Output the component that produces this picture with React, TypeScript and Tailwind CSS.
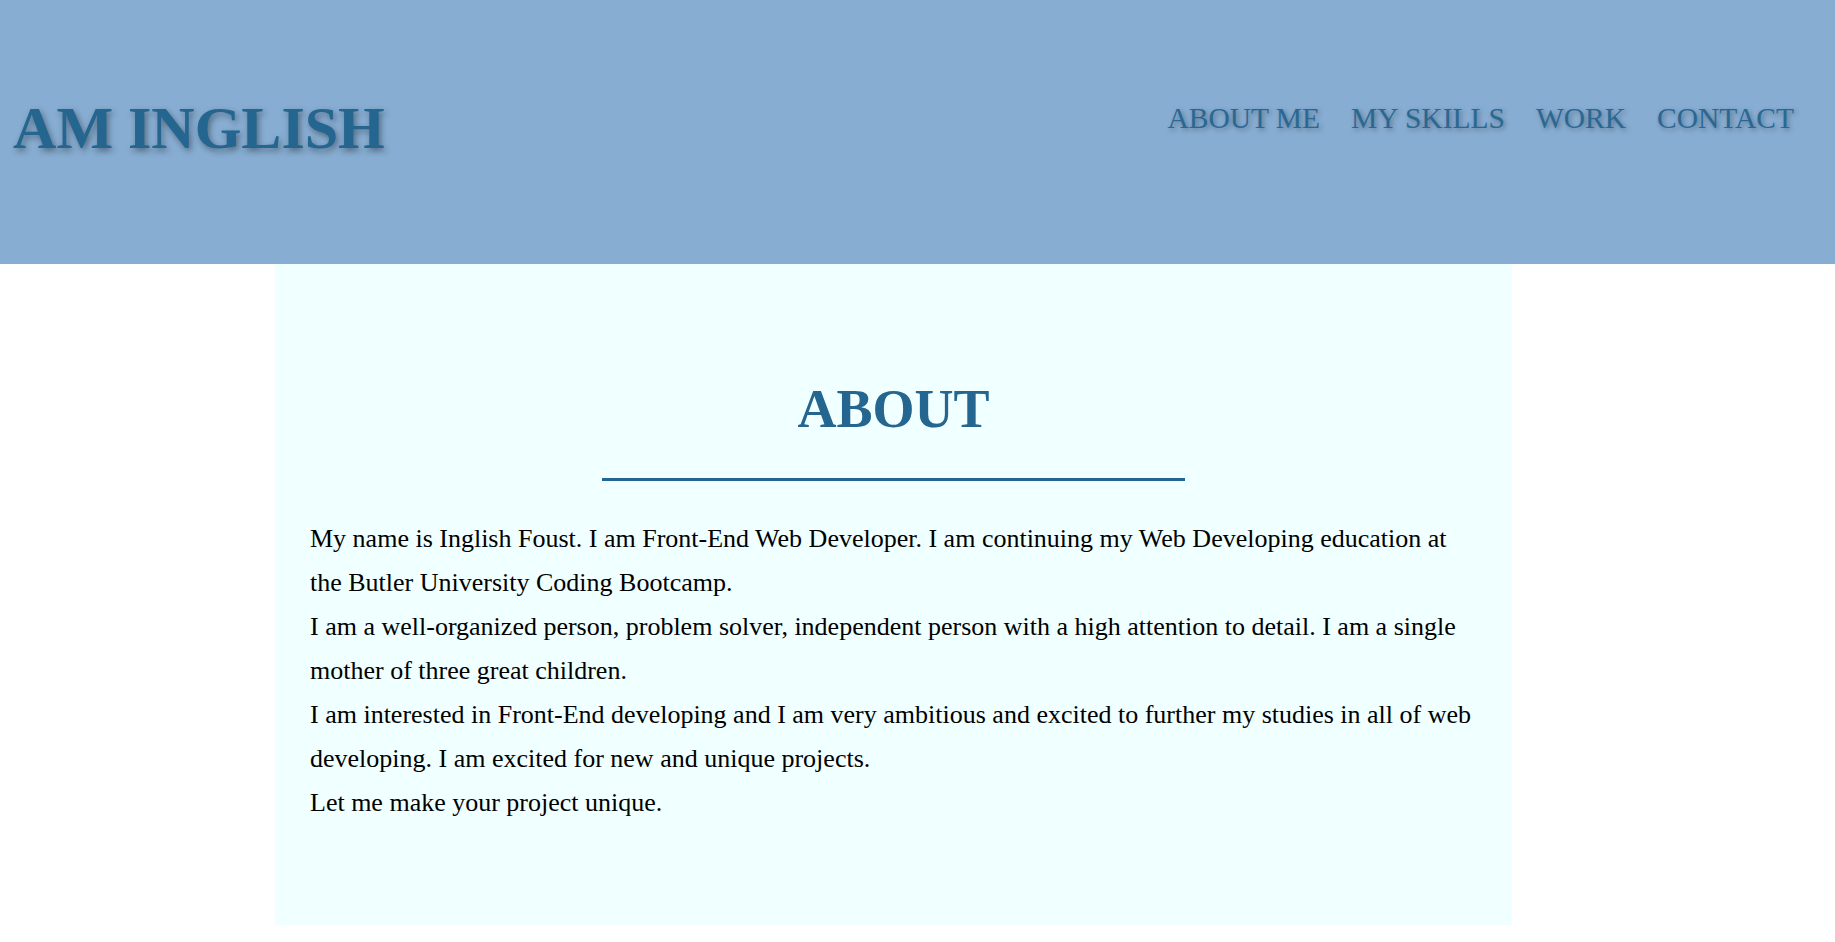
const paragraphs = [
  'My name is Inglish Foust. I am Front-End Web Developer. I am continuing my Web Developing education at the Butler University Coding Bootcamp.',
  'I am a well-organized person, problem solver, independent person with a high attention to detail. I am a single mother of three great children.',
  'I am interested in Front-End developing and I am very ambitious and excited to further my studies in all of web developing. I am excited for new and unique projects.',
  'Let me make your project unique.',
];

const navLinks = ['ABOUT ME', 'MY SKILLS', 'WORK', 'CONTACT'];

export default function App() {
  return (
    <div className="min-h-screen bg-white font-['Liberation_Serif','Times_New_Roman',serif]">
      <header className="h-[264px] bg-[#87add2] flex justify-between items-start overflow-hidden">
        <h1 className="mt-[98px] ml-[-28px] text-[60px] leading-none font-bold whitespace-nowrap text-[#24668f] [text-shadow:2px_3px_6px_rgba(0,0,0,0.4)]">
          <span className="mr-[6px]">I</span> AM INGLISH
        </h1>
        <nav className="mt-[104px] mr-[41px] flex gap-[31px]">
          {navLinks.map((link) => (
            <a
              key={link}
              href="#"
              className="text-[29.5px] leading-none whitespace-nowrap text-[#2a6893] [text-shadow:2px_2px_5px_rgba(0,0,0,0.35)]"
            >
              {link}
            </a>
          ))}
        </nav>
      </header>

      <section className="ml-[275px] w-[1237px] bg-[#f0ffff] pt-[105px] pb-[100px] px-[35px]">
        <h2 className="text-center text-[54px] font-bold text-[#24668f]">ABOUT</h2>
        <div className="mx-auto mt-[28px] w-[583px] h-[3px] bg-[#24668f]" />
        <div className="mt-[36px] text-[26px] leading-[44px] text-black">
          {paragraphs.map((p, i) => (
            <p key={i}>{p}</p>
          ))}
        </div>
      </section>
    </div>
  );
}
